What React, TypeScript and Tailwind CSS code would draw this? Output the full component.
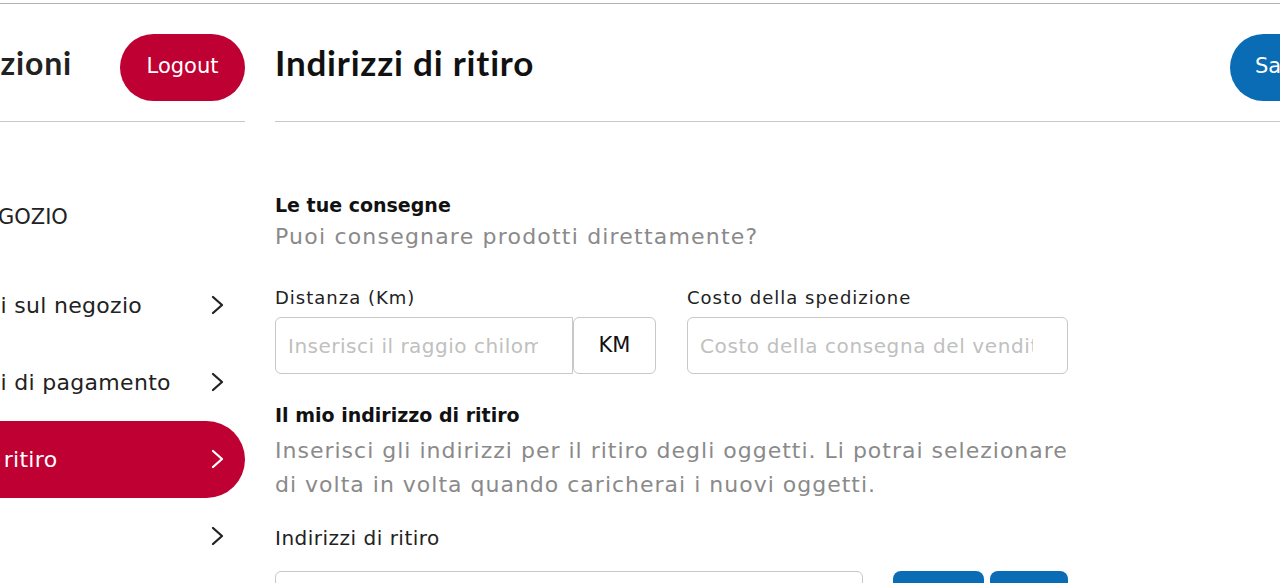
const sans = { fontFamily: "'DejaVu Sans', 'Open Sans', sans-serif" };
const heading = { fontFamily: "Lato, 'Open Sans', sans-serif" };

function Chevron() {
  return (
    <svg width="13" height="20" viewBox="0 0 13 20" fill="none" stroke="currentColor" strokeWidth="2.3" strokeLinecap="round" strokeLinejoin="round">
      <polyline points="2,2 11,10 2,18" />
    </svg>
  );
}

function NavItem({ label, active }: { label: string; active?: boolean }) {
  return (
    <div
      className={
        "flex items-center justify-between h-[77px] pl-[11px] pr-[21px] rounded-r-full text-[22px] tracking-[0.3px] " +
        (active ? "bg-[#bf0032] text-white" : "text-[#222]")
      }
    >
      <span className="whitespace-nowrap">{label}</span>
      <Chevron />
    </div>
  );
}

export default function App() {
  return (
    <div className="h-[583px] w-[1280px] overflow-hidden bg-white pt-[3px]" style={sans}>
      <div className="border-t border-[#b4b4b4]" />
      <div className="flex w-max -ml-[144px]">
        {/* sidebar */}
        <aside className="w-[389px] shrink-0">
          <div className="flex items-center justify-end gap-[48px] h-[118px] border-b border-[#c8c8c8]">
            <h2 className="text-[32px] font-bold text-[#222] whitespace-nowrap tracking-[0.8px]" style={heading}>
              Impostazioni
            </h2>
            <button className="mt-[9px] h-[67px] w-[125px] rounded-full bg-[#bf0032] text-white text-[21px]">
              Logout
            </button>
          </div>
          <div className="pl-[113px] pt-[80px] pb-[33px] text-[21px] text-[#222] whitespace-nowrap">NEGOZIO</div>
          <NavItem label="Informazioni sul negozio" />
          <NavItem label="Informazioni di pagamento" />
          <NavItem label="Indirizzi del ritiro" active />
          <NavItem label="Notifiche" />
        </aside>

        {/* main */}
        <main className="w-[1085px] ml-[30px] shrink-0">
          <div className="flex items-center justify-between h-[118px] border-b border-[#c8c8c8]">
            <h1 className="text-[35px] font-bold text-[#111] tracking-[0.8px]" style={heading}>
              Indirizzi di ritiro
            </h1>
            <button className="mt-[9px] h-[67px] w-[130px] rounded-full bg-[#0a6cb4] text-white text-[21px] text-left pl-[25px]">
              Salva
            </button>
          </div>

          <section className="w-[793px] pt-[70px]">
            <h3 className="text-[19px] font-bold text-[#111] leading-[26px]">Le tue consegne</h3>
            <p className="text-[22px] text-[#8a8a8a] leading-[30px] mt-[4px] tracking-[1.2px]">
              Puoi consegnare prodotti direttamente?
            </p>

            <div className="grid grid-cols-2 gap-[31px] mt-[34px]">
              <div>
                <label className="block text-[18px] text-[#222] leading-[24px] mb-[7px] tracking-[1px]">
                  Distanza (Km)
                </label>
                <div className="flex h-[57px]">
                  <input
                    className="w-[298px] rounded-l-[6px] border border-[#c8c8c8] pl-[12px] pr-[34px] text-[20px] tracking-[0.5px] outline-none placeholder:text-[#c0c0c0]"
                    placeholder="Inserisci il raggio chilometrico"
                  />
                  <div className="flex-1 flex items-center justify-center rounded-[6px] border border-[#c8c8c8] text-[21px] text-[#111]">
                    KM
                  </div>
                </div>
              </div>
              <div>
                <label className="block text-[18px] text-[#222] leading-[24px] mb-[7px] tracking-[1px]">
                  Costo della spedizione
                </label>
                <input
                  className="w-full h-[57px] rounded-[6px] border border-[#c8c8c8] pl-[12px] pr-[34px] text-[20px] tracking-[0.6px] outline-none placeholder:text-[#c0c0c0]"
                  placeholder="Costo della consegna del venditore"
                />
              </div>
            </div>

            <h3 className="text-[19px] font-bold text-[#111] leading-[26px] mt-[28px]">Il mio indirizzo di ritiro</h3>
            <p className="text-[22px] text-[#8a8a8a] leading-[34px] mt-[6px] tracking-[1px]">
              Inserisci gli indirizzi per il ritiro degli oggetti. Li potrai selezionare di volta in volta quando
              caricherai i nuovi oggetti.
            </p>

            <div className="text-[20px] text-[#222] leading-[26px] mt-[23px] tracking-[0.5px]">Indirizzi di ritiro</div>
            <div className="flex mt-[20px] h-[57px]">
              <input className="w-[588px] rounded-[6px] border border-[#c8c8c8] outline-none" />
              <div className="w-[91px] ml-[30px] rounded-t-[8px] bg-[#0a6cb4]" />
              <div className="w-[78px] ml-[6px] rounded-t-[8px] bg-[#0a6cb4]" />
            </div>
          </section>
        </main>
      </div>
    </div>
  );
}
